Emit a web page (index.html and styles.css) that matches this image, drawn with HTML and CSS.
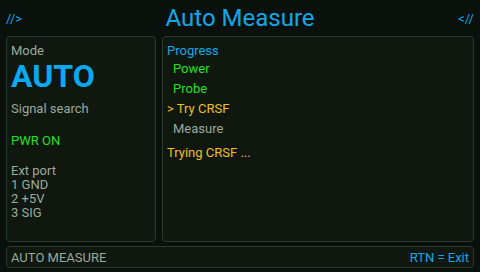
FILE: index.html
```html
<!DOCTYPE html>
<html lang="en">
<head>
    <meta charset="UTF-8">
    <meta name="viewport" content="width=device-width, initial-scale=1.0">
    <title>Auto Measure</title>
    <link rel="stylesheet" href="styles.css">
</head>
<body>
    <div class="screen">
        <div class="header">
            <span class="deco">//&gt;</span>
            <span class="title">Auto Measure</span>
            <span class="deco">&lt;//</span>
        </div>

        <div class="main">
            <div class="panel left">
                <div class="label">Mode</div>
                <div class="mode">AUTO</div>
                <div class="label status">Signal search</div>
                <div class="green pwr">PWR ON</div>
                <div class="port">
                    <div>Ext port</div>
                    <div>1 GND</div>
                    <div>2 +5V</div>
                    <div>3 SIG</div>
                </div>
            </div>

            <div class="panel right">
                <div class="blue">Progress</div>
                <div class="step green indent">Power</div>
                <div class="step green indent">Probe</div>
                <div class="step yellow">&gt; Try CRSF</div>
                <div class="step gray indent">Measure</div>
                <div class="yellow note">Trying CRSF ...</div>
            </div>
        </div>

        <div class="footer">
            <span class="gray">AUTO MEASURE</span>
            <span class="blue">RTN = Exit</span>
        </div>
    </div>
</body>
</html>
```

FILE: styles.css
```css
body {
    margin: 0;
    background: #0a100b;
    font-family: Roboto, "Liberation Sans", sans-serif;
    color: #9aaa9c;
}
.screen {
    width: 480px;
    height: 272px;
    display: flex;
    flex-direction: column;
    padding: 0 6px 4px 6px;
    box-sizing: border-box;
}
.header {
    height: 36px;
    display: flex;
    align-items: center;
    justify-content: space-between;
    color: #12a8e8;
}
.deco {
    font-size: 13px;
}
.title {
    font-size: 24px;
}
.main {
    display: flex;
    gap: 6px;
    height: 206px;
}
.panel {
    background: #0f170f;
    border: 1px solid #2a3a2e;
    border-radius: 4px;
    box-sizing: border-box;
    font-size: 13px;
}
.left {
    width: 150px;
    padding: 5px 4px;
}
.right {
    flex: 1;
    padding: 6px 4px;
}
.left .label:first-child {
    line-height: 17px;
}
.mode {
    color: #0aaaf0;
    font-size: 32px;
    font-weight: bold;
    line-height: 38px;
    margin-top: -2px;
}
.status {
    margin-top: 6px;
}
.pwr {
    margin-top: 17px;
}
.port {
    margin-top: 16px;
    line-height: 14px;
}
.step {
    line-height: 20px;
}
.right .blue {
    line-height: 16px;
}
.indent {
    padding-left: 6px;
}
.note {
    margin-top: 6px;
}
.green {
    color: #22e022;
}
.yellow {
    color: #f0c020;
}
.gray {
    color: #9aaa9c;
}
.blue {
    color: #12a8e8;
}
.footer {
    margin-top: 4px;
    height: 22px;
    background: #0f170f;
    border: 1px solid #2a3a2e;
    border-radius: 4px;
    box-sizing: border-box;
    display: flex;
    align-items: center;
    justify-content: space-between;
    padding: 0 4px;
    font-size: 13px;
}
```
